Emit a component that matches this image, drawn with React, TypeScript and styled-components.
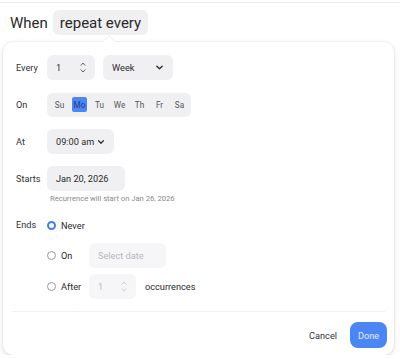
import React, { useState } from "react";
import styled, { createGlobalStyle } from "styled-components";

const GlobalStyle = createGlobalStyle`
  html, body {
    margin: 0;
    padding: 0;
    background: #ffffff;
    font-family: Roboto, "Noto Sans", Arial, sans-serif;
    color: #222;
  }
`;

const TopLine = styled.div`
  height: 2px;
  border-bottom: 1px solid #ececec;
`;

const Header = styled.div`
  display: flex;
  align-items: center;
  gap: 5px;
  height: 39px;
  padding-left: 10px;
  font-size: 15px;
  color: #2a2a2a;
`;

const Chip = styled.span`
  display: inline-flex;
  align-items: center;
  height: 25px;
  padding: 0 7px;
  border-radius: 6px;
  background: #f0f0f3;
`;

const Card = styled.div`
  position: relative;
  margin: 0 6px 0 3px;
  height: 313px;
  box-sizing: border-box;
  padding: 13px 7px 0 13px;
  border-radius: 10px;
  background: #fff;
  box-shadow: 0 0 0 1px rgba(0, 0, 0, 0.04), 0 2px 6px rgba(0, 0, 0, 0.1);
  display: flex;
  flex-direction: column;
`;

const Caret = styled.span`
  position: absolute;
  top: -5px;
  left: 101px;
  width: 9px;
  height: 9px;
  background: #fff;
  transform: rotate(45deg);
  border-top: 1px solid rgba(0, 0, 0, 0.05);
  border-left: 1px solid rgba(0, 0, 0, 0.05);
`;

const Form = styled.div`
  display: flex;
  flex-direction: column;
  gap: 12px;
`;

const Row = styled.div`
  display: flex;
  align-items: center;
  gap: 6px;
  min-height: 25px;
`;

const Label = styled.span`
  width: 25px;
  flex: none;
  font-size: 9.2px;
  color: #333;
  white-space: nowrap;
`;

const Field = styled.div<{ $w: number; $muted?: boolean }>`
  display: flex;
  align-items: center;
  justify-content: space-between;
  box-sizing: border-box;
  width: ${(p) => p.$w}px;
  height: 25px;
  padding: 0 9px;
  border-radius: 6px;
  background: ${(p) => (p.$muted ? "#f6f6f8" : "#f0f0f3")};
  font-size: 9.2px;
  white-space: nowrap;
  color: ${(p) => (p.$muted ? "#b8b8bc" : "#2a2a2a")};
`;

const Spinner = styled.span<{ $muted?: boolean }>`
  display: flex;
  flex-direction: column;
  align-items: center;
  gap: 3px;
  color: ${(p) => (p.$muted ? "#c8c8cc" : "#555")};
`;

const SelectCaret = styled.span`
  display: flex;
  color: #333;
`;

const DayGroup = styled.div`
  display: flex;
  align-items: center;
  gap: 5px;
  height: 24px;
  padding: 0 4px 0 5px;
  border-radius: 6px;
  background: #f0f0f3;
`;

const Day = styled.span<{ $active?: boolean }>`
  width: 15px;
  height: 15px;
  display: flex;
  align-items: center;
  justify-content: center;
  border-radius: 2px;
  font-size: 8.2px;
  color: ${(p) => (p.$active ? "#1d3f8a" : "#555")};
  background: ${(p) => (p.$active ? "#4b86f2" : "transparent")};
`;

const Hint = styled.div`
  margin: -9px 0 0 34px;
  font-size: 7.6px;
  color: #8a8a8e;
`;

const EndsBlock = styled.div`
  display: flex;
  gap: 6px;
  margin-top: 15px;
`;

const EndsLabel = styled(Label)`
  padding-top: 1px;
  line-height: 12px;
`;

const Options = styled.div`
  display: flex;
  flex-direction: column;
  gap: 6px;
`;

const Option = styled.div<{ $compact?: boolean }>`
  display: flex;
  align-items: center;
  height: ${(p) => (p.$compact ? "14px" : "25px")};
  margin-bottom: ${(p) => (p.$compact ? "5px" : "0")};
`;

const RadioWrap = styled.label`
  display: flex;
  align-items: center;
  gap: 5px;
  width: 42px;
  font-size: 9.2px;
  color: #2a2a2a;
  cursor: pointer;
`;

const Radio = styled.span<{ $on?: boolean }>`
  box-sizing: border-box;
  width: 9px;
  height: 9px;
  border-radius: 50%;
  border: ${(p) => (p.$on ? "2.5px solid #3f7ee8" : "1px solid #9a9a9e")};
  background: #fff;
`;

const After = styled.span`
  margin-left: 9px;
  font-size: 9.2px;
  color: #2a2a2a;
`;

const Divider = styled.div`
  margin: 12px 2px 0 -4px;
  border-top: 1px solid #f0f0f0;
`;

const Footer = styled.div`
  display: flex;
  justify-content: flex-end;
  align-items: center;
  gap: 13px;
  padding-top: 10px;
`;

const CancelButton = styled.button`
  border: none;
  background: none;
  font-family: inherit;
  font-size: 9.2px;
  color: #333;
  padding: 0;
`;

const DoneButton = styled.button`
  border: none;
  height: 26px;
  width: 37px;
  border-radius: 8px;
  background: #4b86f4;
  color: #e6eeff;
  font-family: inherit;
  font-size: 9.2px;
  padding: 0;
`;

const Chevron = ({ size = 8 }: { size?: number }) => (
  <svg width={size} height={size} viewBox="0 0 10 10">
    <path d="M2 3.5 L5 6.5 L8 3.5" fill="none" stroke="currentColor" strokeWidth="1.6" strokeLinecap="round" strokeLinejoin="round" />
  </svg>
);

const Arrows = ({ muted }: { muted?: boolean }) => (
  <Spinner $muted={muted}>
    <svg width="6" height="4" viewBox="0 0 6 4">
      <path d="M1 3.2 L3 1 L5 3.2" fill="none" stroke="currentColor" strokeWidth="0.9" strokeLinecap="round" />
    </svg>
    <svg width="6" height="4" viewBox="0 0 6 4">
      <path d="M1 0.8 L3 3 L5 0.8" fill="none" stroke="currentColor" strokeWidth="0.9" strokeLinecap="round" />
    </svg>
  </Spinner>
);

const days = ["Su", "Mo", "Tu", "We", "Th", "Fr", "Sa"];

export default function App() {
  const [ends, setEnds] = useState("never");
  return (
    <>
      <GlobalStyle />
      <TopLine />
      <Header>
        When <Chip>repeat every</Chip>
      </Header>
      <Card>
        <Caret />
        <Form>
          <Row>
            <Label>Every</Label>
            <Field $w={48}>
              1 <Arrows />
            </Field>
            <Field $w={70} style={{ marginLeft: 2 }}>
              Week
              <SelectCaret>
                <Chevron size={9} />
              </SelectCaret>
            </Field>
          </Row>
          <Row>
            <Label>On</Label>
            <DayGroup>
              {days.map((d) => (
                <Day key={d} $active={d === "Mo"}>
                  {d}
                </Day>
              ))}
            </DayGroup>
          </Row>
          <Row>
            <Label>At</Label>
            <Field $w={67}>
              09:00 am
              <SelectCaret>
                <Chevron size={8} />
              </SelectCaret>
            </Field>
          </Row>
          <Row>
            <Label>Starts</Label>
            <Field $w={78}>Jan 20, 2026</Field>
          </Row>
          <Hint>Recurrence will start on Jan 26, 2026</Hint>
        </Form>
        <EndsBlock>
          <EndsLabel>Ends</EndsLabel>
          <Options>
            <Option $compact>
              <RadioWrap onClick={() => setEnds("never")}>
                <Radio $on={ends === "never"} />
                Never
              </RadioWrap>
            </Option>
            <Option>
              <RadioWrap onClick={() => setEnds("on")}>
                <Radio $on={ends === "on"} />
                On
              </RadioWrap>
              <Field $w={77} $muted>
                Select date
              </Field>
            </Option>
            <Option>
              <RadioWrap onClick={() => setEnds("after")}>
                <Radio $on={ends === "after"} />
                After
              </RadioWrap>
              <Field $w={47} $muted>
                1 <Arrows muted />
              </Field>
              <After>occurrences</After>
            </Option>
          </Options>
        </EndsBlock>
        <Divider />
        <Footer>
          <CancelButton>Cancel</CancelButton>
          <DoneButton>Done</DoneButton>
        </Footer>
      </Card>
    </>
  );
}
